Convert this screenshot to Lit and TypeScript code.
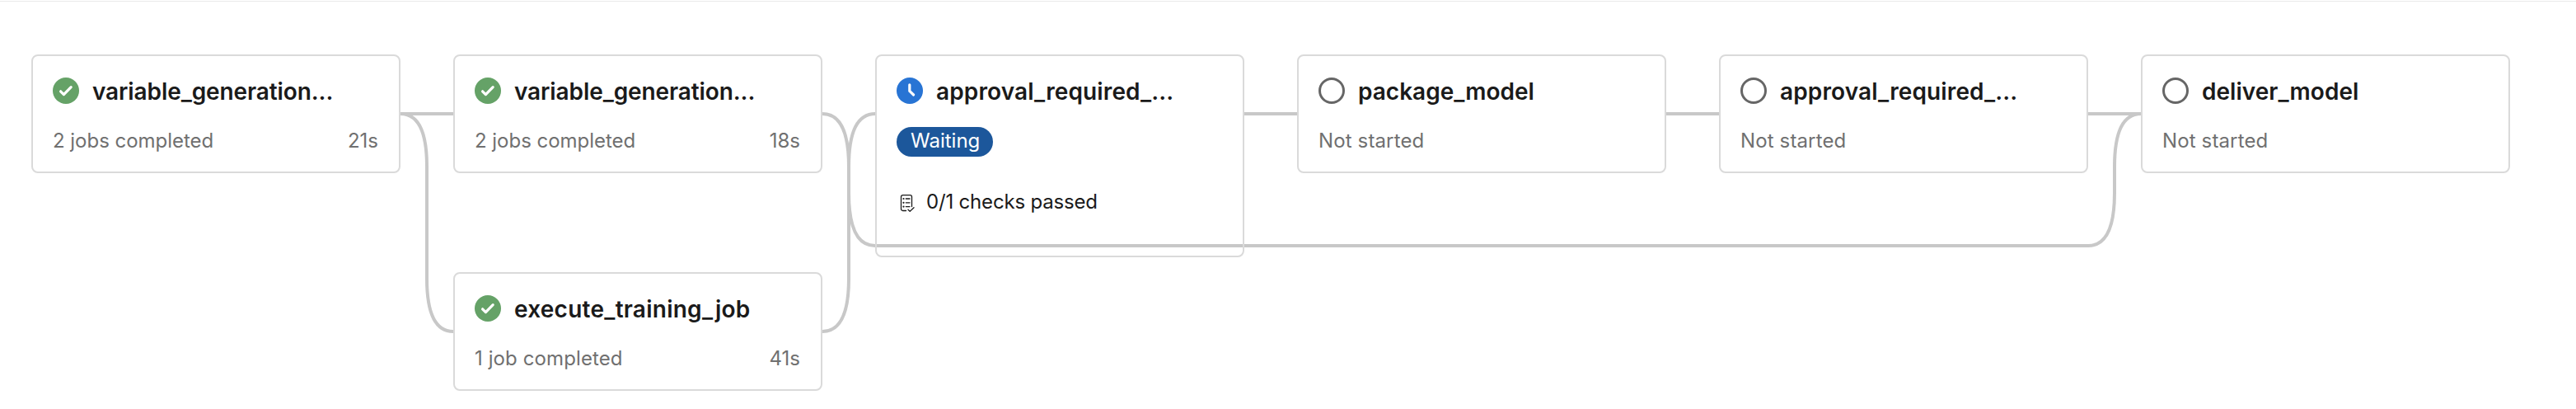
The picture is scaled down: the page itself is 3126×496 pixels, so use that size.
import { LitElement, html, css, svg, nothing } from "lit";
import { customElement, property } from "lit/decorators.js";

type Status = "done" | "waiting" | "idle";

interface Stage {
  title: string;
  tracking?: number;
  detailTracking?: number;
  status: Status;
  detail: string;
  time?: string;
  checks?: string;
}

const icons = {
  done: svg`
    <circle cx="16" cy="16" r="16" fill="#65a267"/>
    <path d="M9.600 16.800L13.400 20.600L22.200 11.600" fill="none" stroke="#fff" stroke-width="3.200" stroke-linecap="round" stroke-linejoin="round"/>`,
  waiting: svg`
    <circle cx="16" cy="16" r="16" fill="#2874d4"/>
    <path d="M15.800 8.800V16.400L20.600 21" fill="none" stroke="#fff" stroke-width="3.200" stroke-linecap="round" stroke-linejoin="round"/>`,
  idle: svg`<circle cx="16" cy="16" r="14.500" fill="none" stroke="#666" stroke-width="3"/>`,
};

const checklist = svg`
  <g fill="none" stroke="#1a1a1a" stroke-width="1.300" stroke-linecap="round" stroke-linejoin="round">
    <path d="M7.500 19.500H3.500a2 2 0 0 1-2-2V2.700a2 2 0 0 1 2-2H12.500a2 2 0 0 1 2 2V14.500"/>
    <path d="M7.300 5h4.700M7.300 9.800h4.700M7.300 14.600h4.700"/>
    <path d="M10 18.300l2.200 2.100L17 15.800"/>
  </g>
  <g fill="#1a1a1a">
    <circle cx="4.500" cy="5" r="1.100"/><circle cx="4.500" cy="9.800" r="1.100"/><circle cx="4.500" cy="14.600" r="1.100"/>
  </g>`;

@customElement("stage-card")
export class StageCard extends LitElement {
  @property({ attribute: false }) stage!: Stage;

  static styles = css`
    :host {
      display: block;
      box-sizing: border-box;
      width: 448px;
      padding: 22px 24px 18px;
      border: 2px solid #dadada;
      border-radius: 8px;
      font-size: 24px;
      line-height: 38px;
      color: #1a1a1a;
    }
    .head { display: flex; align-items: center; gap: 16px; height: 40px; }
    .icon { display: block; width: 32px; height: 32px; flex: none; }
    .title { margin-top: 2px; font-size: 28px; line-height: 38px; font-weight: 600; white-space: nowrap; }
    .row { display: flex; justify-content: space-between; margin-top: 22px; padding-right: 1px; color: #707070; }
    .pill {
      width: fit-content;
      margin-top: 24px;
      padding: 0 16px 2px 17px;
      border-radius: 18px;
      line-height: 34px;
      background: #1c579b;
      color: #fff;
    }
    .checks { display: flex; align-items: center; gap: 14px; margin: 36px 0 28px; padding-left: 4px; }
    .doc { display: block; width: 18px; height: 21px; margin-top: 3px; flex: none; }
    .count { letter-spacing: -0.18px; }
  `;

  render() {
    const s = this.stage;
    return html`
      <div class="head">
        <svg class="icon" viewBox="0 0 32 32">${icons[s.status]}</svg>
        <span class="title" style="letter-spacing:${s.tracking ?? 0}px">${s.title}</span>
      </div>
      ${s.status === "waiting"
        ? html`<div class="pill">${s.detail}</div>`
        : html`<div class="row">
            <span style="letter-spacing:${s.detailTracking ?? 0}px">${s.detail}</span>
            ${s.time ? html`<span>${s.time}</span>` : nothing}
          </div>`}
      ${s.checks
        ? html`<div class="checks">
            <svg class="doc" viewBox="0 0 18 21">${checklist}</svg>
            <span class="count">${s.checks}</span>
          </div>`
        : nothing}
    `;
  }
}

const columns: Stage[][] = [
  [{ title: "variable_generation...", tracking: -0.1, status: "done", detail: "2 jobs completed", detailTracking: -0.03, time: "21s" }],
  [
    { title: "variable_generation...", tracking: -0.1, status: "done", detail: "2 jobs completed", detailTracking: -0.03, time: "18s" },
    { title: "execute_training_job", tracking: 0.25, status: "done", detail: "1 job completed", detailTracking: 0.1, time: "41s" },
  ],
  [{ title: "approval_required_...", tracking: 0.12, status: "waiting", detail: "Waiting", checks: "0/1 checks passed" }],
  [{ title: "package_model", status: "idle", detail: "Not started", detailTracking: 0.13 }],
  [{ title: "approval_required_...", tracking: 0.12, status: "idle", detail: "Not started", detailTracking: 0.13 }],
  [{ title: "deliver_model", tracking: 0.03, status: "idle", detail: "Not started", detailTracking: 0.13 }],
];

const links = [
  "M486 138H550",
  "M486 138Q518 138 518 202V338Q518 402 550 402",
  "M998 138Q1030 138 1030 202V338Q1030 402 998 402",
  "M1030 202Q1030 138 1062 138",
  "M1030 202V234Q1030 298 1062 298H2534Q2566 298 2566 234V202Q2566 138 2598 138",
  "M1510 138H1574",
  "M2022 138H2086",
  "M2534 138H2598",
];

@customElement("app-root")
export class AppRoot extends LitElement {
  static styles = css`
    :host {
      display: block;
      position: relative;
      box-sizing: border-box;
      height: 496px;
      padding-top: 1px;
      overflow: hidden;
      background: #fff;
      font-family: Inter, "Liberation Sans", sans-serif;
    }
    .rule { height: 1px; background: #eaeaea; }
    .links { position: absolute; left: 0; top: 0; width: 3126px; height: 496px; fill: none; stroke: #c8c8c8; stroke-width: 4; }
    .graph { position: relative; display: flex; align-items: flex-start; gap: 64px; padding: 64px 38px 0; }
    .column { display: flex; flex-direction: column; gap: 120px; flex: none; }
  `;

  render() {
    return html`
      <div class="rule"></div>
      <svg class="links" viewBox="0 0 3126 496">${links.map((d) => svg`<path d=${d}></path>`)}</svg>
      <div class="graph">
        ${columns.map(
          (stages) => html`<div class="column">
            ${stages.map((s) => html`<stage-card .stage=${s}></stage-card>`)}
          </div>`
        )}
      </div>
    `;
  }
}
